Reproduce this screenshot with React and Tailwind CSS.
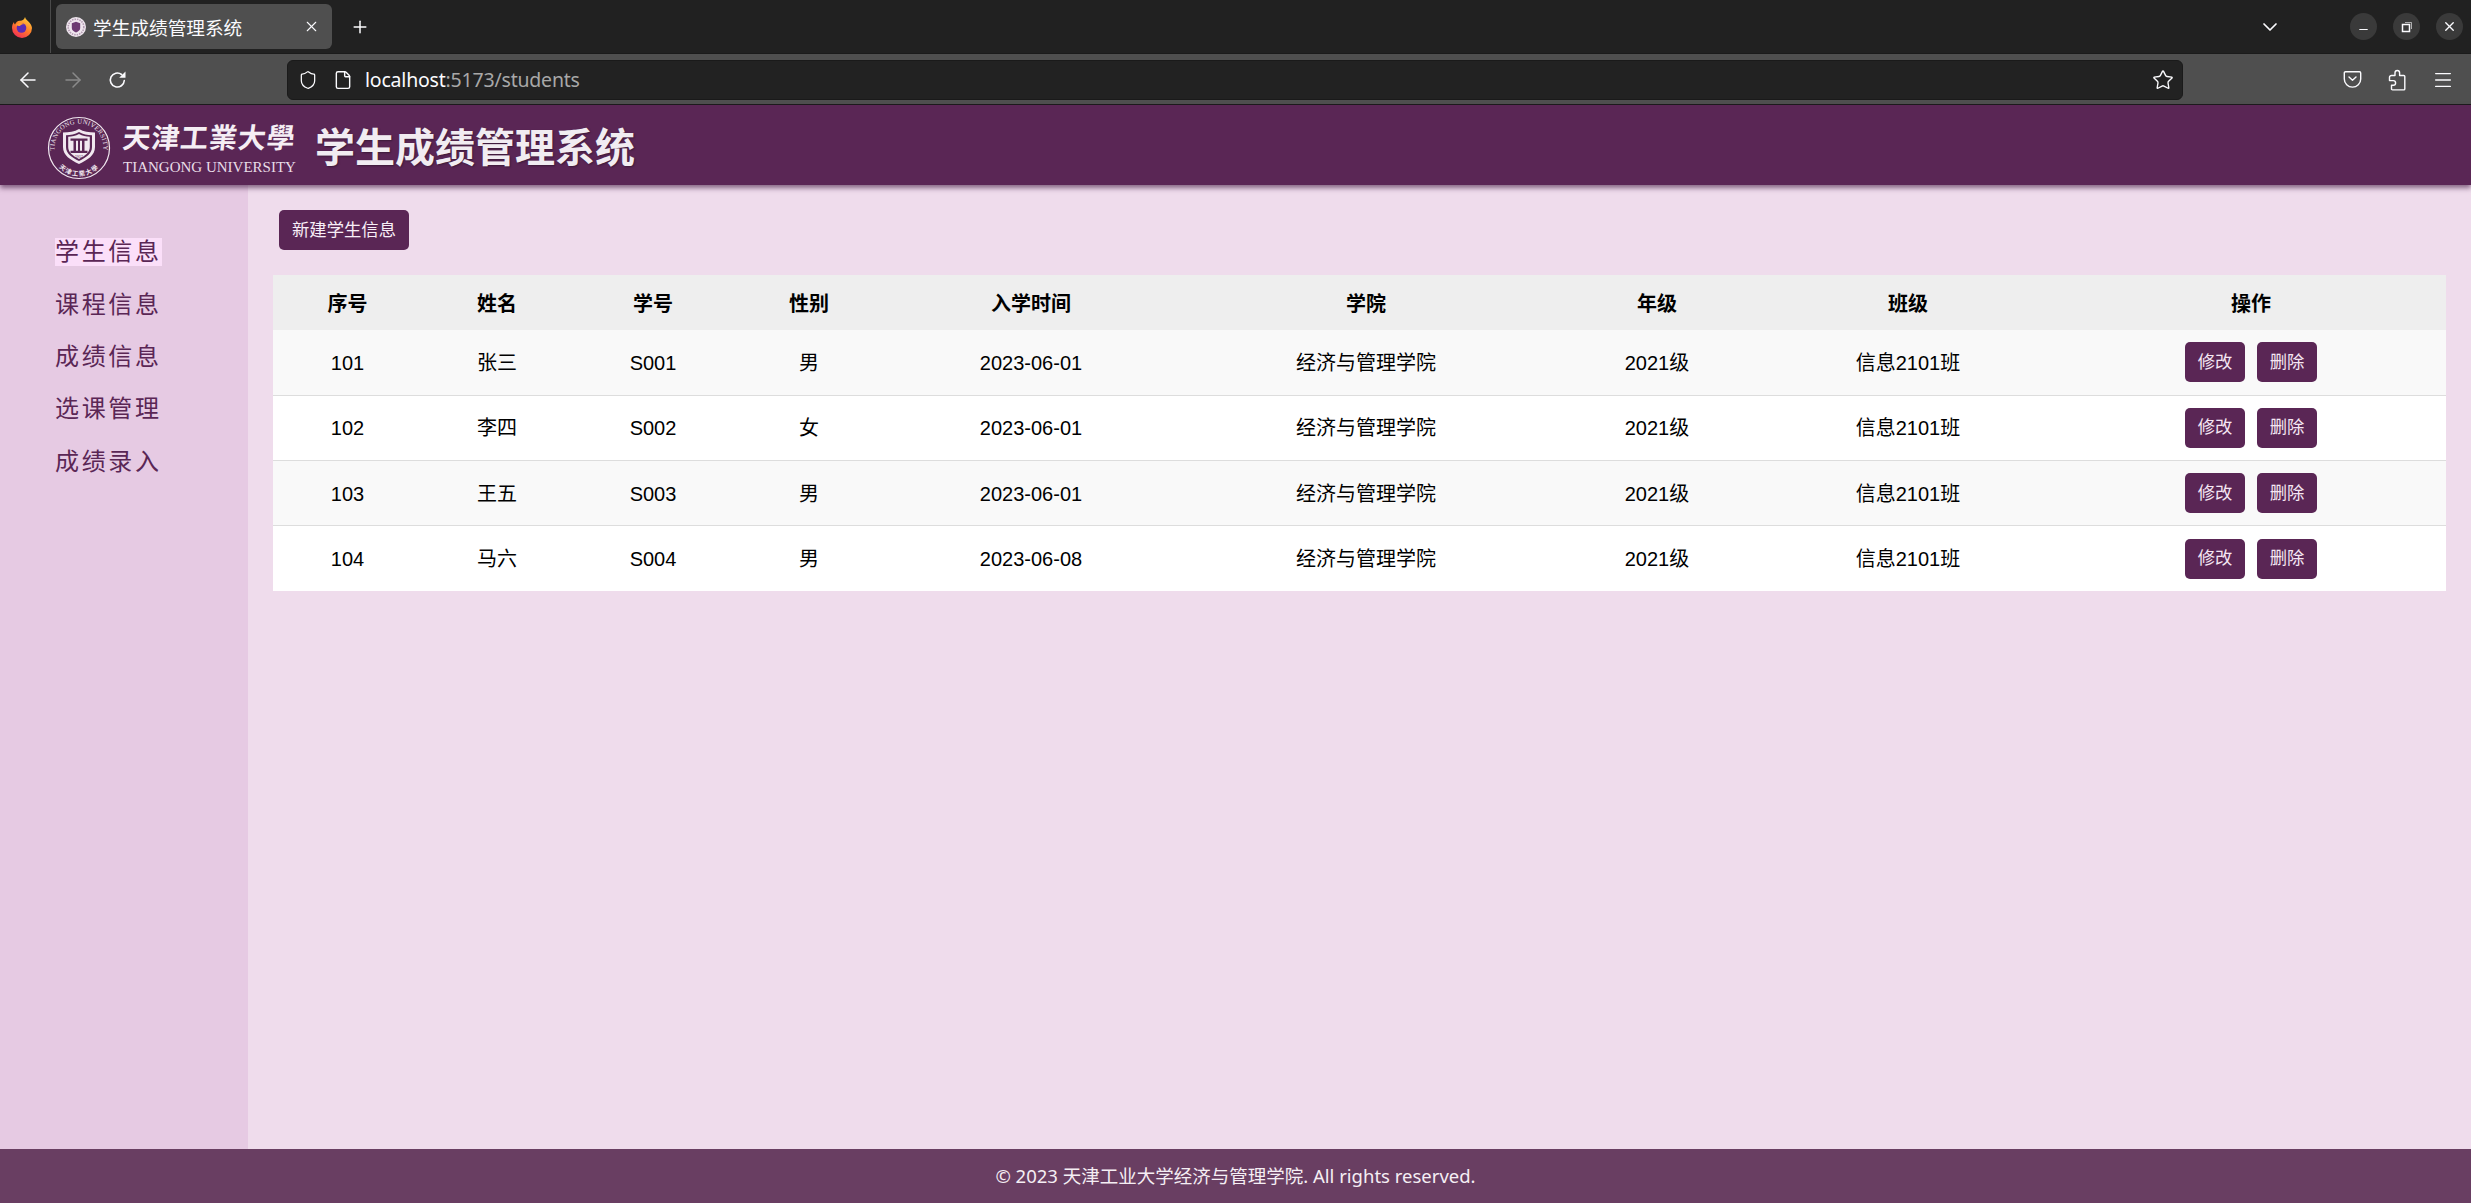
import React from "react";
import { ArrowLeft, ArrowRight, Shield, File, Star, ChevronDown, Minus, X, Plus, Menu } from "lucide-react";

const students = [
  { id: 101, name: "张三", no: "S001", sex: "男", date: "2023-06-01" },
  { id: 102, name: "李四", no: "S002", sex: "女", date: "2023-06-01" },
  { id: 103, name: "王五", no: "S003", sex: "男", date: "2023-06-01" },
  { id: 104, name: "马六", no: "S004", sex: "男", date: "2023-06-08" },
];

const navItems = ["学生信息", "课程信息", "成绩信息", "选课管理", "成绩录入"];

const columns = [
  { label: "序号", width: "w-[149px]" },
  { label: "姓名", width: "w-[150px]" },
  { label: "学号", width: "w-[162px]" },
  { label: "性别", width: "w-[150px]" },
  { label: "入学时间", width: "w-[294px]" },
  { label: "学院", width: "w-[376px]" },
  { label: "年级", width: "w-[206px]" },
  { label: "班级", width: "w-[296px]" },
  { label: "操作", width: "w-[390px]" },
];

function FirefoxLogo() {
  return (
    <svg width="22" height="22" viewBox="0 0 22 22">
      <defs>
        <linearGradient id="fx" x1="0.8" y1="0" x2="0.2" y2="1">
          <stop offset="0" stopColor="#ffd23a" />
          <stop offset="0.5" stopColor="#ff7a2a" />
          <stop offset="1" stopColor="#f0285a" />
        </linearGradient>
      </defs>
      <path d="M14 1c.6 2.400 2 3 3.400 4.400 2.400 2.400 3.600 5 3.600 6.600a10 10 0 0 1-20 0c0-2.600.8-4.600 2-6 0 1.200.4 2 1 2.600C5 6 7 4.600 9 4.800c2 .2 4.600-1.200 5-3.800z" fill="url(#fx)" />
      <circle cx="10.500" cy="12" r="4.800" fill="#5b2bb5" />
      <path d="M5 9c2-2.400 6-2.600 8-.8-2 0-3.400.6-4 1.800-1.600-.2-3 .2-4-1z" fill="#ff9a2e" />
    </svg>
  );
}

function Favicon() {
  return (
    <svg width="20" height="20" viewBox="0 0 20 20">
      <circle cx="10" cy="10" r="10" fill="#efe6ee" />
      <circle cx="10" cy="10" r="7.800" fill="none" stroke="#b39cb2" strokeWidth="1.600" strokeDasharray="1.500 1" />
      <path d="M5.800 6.300 10 4.800l4.200 1.500V11c0 2.500-2.200 3.600-4.200 4.600-2-1-4.200-2.100-4.200-4.600z" fill="#6d3a72" />
    </svg>
  );
}

function ReloadIcon() {
  return (
    <svg width="22" height="22" viewBox="0 0 22 22" fill="none" stroke="#fbfbfe" strokeWidth="1.600" strokeLinecap="round">
      <path d="M17.300 11.500a7 7 0 1 1-2.700-6" />
      <path d="M18.500 2.500v6.300h-6.300z" fill="#fbfbfe" stroke="none" />
    </svg>
  );
}

function PocketIcon() {
  return (
    <svg width="19" height="19" viewBox="0 0 19 19" fill="none" stroke="#fbfbfe" strokeWidth="1.400" strokeLinecap="round" strokeLinejoin="round">
      <path d="M2.500 1.700h14a1.200 1.200 0 0 1 1.200 1.200v6a8.200 8.200 0 0 1-16.400 0v-6a1.200 1.200 0 0 1 1.200-1.200z" />
      <path d="m6 7 3.500 3.300L13 7" />
    </svg>
  );
}

function ExtensionIcon() {
  return (
    <svg width="20" height="22" viewBox="0 0 20 22" fill="none" stroke="#fbfbfe" strokeWidth="1.400" strokeLinejoin="round">
      <path d="M8 6.500V3.800a2.300 2.300 0 0 1 4.600 0v2.700h4.200a1 1 0 0 1 1 1v12.400a1 1 0 0 1-1 1H5.500a1 1 0 0 1-1-1v-3.700h1.800a2.300 2.300 0 0 0 0-4.600H2.500v-3.100a2 2 0 0 1 2-2z" />
    </svg>
  );
}

function RestoreIcon() {
  return (
    <svg width="12" height="12" viewBox="0 0 12 12" fill="none" stroke="#fbfbfe">
      <rect x="1.500" y="3.500" width="7" height="7" strokeWidth="1.500" />
      <path d="M4 1.500h6.500V8" strokeWidth="1" opacity="0.6" />
    </svg>
  );
}

function WindowButton({ children }) {
  return <div className="w-[27px] h-[27px] rounded-full bg-[#3a3a3a] flex items-center justify-center">{children}</div>;
}

function TiangongSeal() {
  return (
    <svg width="64" height="66" viewBox="0 0 64 66" className="shrink-0 mt-[1px]">
      <defs>
        <path id="seal-top" d="M10.800 45.250A24.500 24.500 0 1 1 53.200 45.250" />
        <path id="seal-bottom" d="M4 33a28 28 0 0 0 56 0" />
      </defs>
      <circle cx="32" cy="33" r="30.500" fill="none" stroke="#f1e8f0" strokeWidth="1.200" />
      <text fontFamily="'Liberation Serif', serif" fontSize="6.600" fill="#f1e8f0" letterSpacing="0.300">
        <textPath href="#seal-top" startOffset="50%" textAnchor="middle">TIANGONG UNIVERSITY</textPath>
      </text>
      <text fontFamily="'Noto Sans CJK TC', sans-serif" fontSize="6.500" fontWeight="700" fill="#f1e8f0" letterSpacing="1">
        <textPath href="#seal-bottom" startOffset="50%" textAnchor="middle">天津工業大學</textPath>
      </text>
      <path d="M32 14c4.500 2.800 10 3.500 16 3.500V32c0 8.500-7.500 13-16 17-8.500-4-16-8.500-16-17V17.500c6 0 11.500-.7 16-3.500z" fill="#f1e8f0" />
      <path d="M32 17c4 2.400 8.500 3 13 3.200V32c0 6.800-6 10.600-13 14-7-3.400-13-7.200-13-14V20.200c4.500-.2 9-.8 13-3.200z" fill="#5a2655" />
      <path d="M32 19c3.400 1.900 7 2.600 10.800 2.800V32c0 5.600-5 9-10.800 12-5.800-3-10.800-6.400-10.800-12V21.800c3.800-.2 7.400-.9 10.800-2.800z" fill="#f1e8f0" />
      <path d="M23.500 23.500h17v2.200h-3v10h3v2.200h-17v-2.200h3v-10h-3zm5.500 2.200v10h2v-10zm4 0v10h2v-10z" fill="#5a2655" />
      <text x="32" y="43" textAnchor="middle" fontFamily="'Liberation Sans', sans-serif" fontSize="3.600" fill="#5a2655">1912</text>
    </svg>
  );
}

function BrowserChrome() {
  return (
    <div className="font-['Noto_Sans','Noto_Sans_CJK_SC',sans-serif] text-[#fbfbfe]">
      <div className="h-[53px] bg-[#212121] flex items-center">
        <div className="w-[51px] h-full flex items-center justify-center border-r border-[#4a4a4a] pr-[6px]">
          <FirefoxLogo />
        </div>
        <div className="ml-[5px] w-[276px] h-[45px] rounded-[6px] bg-[#4f4f4f] flex items-center pl-[10px] pr-[12px]">
          <Favicon />
          <span className="ml-[7px] mt-[1px] text-[18.670px] leading-none font-['Noto_Sans_CJK_SC',sans-serif]">学生成绩管理系统</span>
          <X className="ml-auto w-[17px] h-[17px]" strokeWidth={1.500} />
        </div>
        <Plus className="ml-[18px] w-[20px] h-[20px]" strokeWidth={1.800} />
        <ChevronDown className="ml-auto w-[24px] h-[24px]" strokeWidth={1.700} />
        <div className="ml-[68px] mr-[8px] flex items-center gap-[16px]">
          <WindowButton><Minus className="w-[13px] h-[13px] mt-[5px]" strokeWidth={2} /></WindowButton>
          <WindowButton><RestoreIcon /></WindowButton>
          <WindowButton><X className="w-[15px] h-[15px]" strokeWidth={2.200} /></WindowButton>
        </div>
      </div>
      <div className="h-[52px] pt-[1px] bg-[#4f4f4f] border-y border-[#1b1b1b] flex items-center">
        <ArrowLeft className="ml-[16px] w-[24px] h-[24px]" strokeWidth={1.500} />
        <ArrowRight className="ml-[21px] w-[24px] h-[24px] text-[#8a8a8a]" strokeWidth={1.500} />
        <div className="ml-[22px]"><ReloadIcon /></div>
        <div className="ml-[158px] w-[1896px] h-[40px] rounded-[6px] bg-[#222222] border border-[#1a1a1a] flex items-center pl-[10px] pr-[8px]">
          <Shield className="w-[20px] h-[20px]" strokeWidth={1.500} />
          <File className="ml-[15px] w-[20px] h-[20px]" strokeWidth={1.700} />
          <span className="ml-[12px] text-[19.500px] leading-none tracking-[-0.2px]">
            localhost<span className="text-[#a8a8a8]">:5173/students</span>
          </span>
          <Star className="ml-auto w-[22px] h-[22px]" strokeWidth={1.500} />
        </div>
        <div className="ml-[160px]"><PocketIcon /></div>
        <div className="ml-[25px]"><ExtensionIcon /></div>
        <Menu className="ml-[25px] w-[22px] h-[22px]" strokeWidth={1.500} />
      </div>
    </div>
  );
}

function ActionButton({ children }) {
  return (
    <button className="w-[60px] h-[40px] pt-[1px] rounded-[5px] bg-[#5a2655] text-[#f5e6f3] text-[17.330px]">{children}</button>
  );
}

export default function App() {
  return (
    <div className="h-screen flex flex-col overflow-hidden font-['Liberation_Sans','Noto_Sans_CJK_SC',sans-serif]">
      <BrowserChrome />

      <header className="relative z-10 h-[80px] shrink-0 bg-[#5a2655] flex items-center pt-[4px] pl-[47px] shadow-[0_3px_5px_rgba(60,20,60,0.6)]">
        <TiangongSeal />
        <div className="ml-[12px] w-[174px]">
          <div className="-skew-x-6 text-[28px] leading-[34px] font-bold tracking-[0.8px] text-[#f5eef4] whitespace-nowrap font-['Noto_Sans_CJK_TC',sans-serif]">天津工業大學</div>
          <div className="mt-[7px] text-[15px] leading-[15px] text-[#e9dde8] whitespace-nowrap font-['Liberation_Serif',serif]">TIANGONG UNIVERSITY</div>
        </div>
        <h1 className="ml-[18px] mt-[2px] text-[40px] font-bold leading-none text-[#f1ecf1] [text-shadow:1px_1px_2px_rgba(0,0,0,0.35)]">学生成绩管理系统</h1>
      </header>

      <div className="flex-1 flex min-h-0">
        <aside className="w-[248px] shrink-0 bg-[#e6cae3] pt-[41px] pl-[55px]">
          <ul>
            {navItems.map((item, i) => (
              <li key={item} className="h-[52.400px] flex items-center">
                <span className={`text-[24px] leading-[28px] tracking-[2.670px] text-[#5a2655] ${i === 0 ? "bg-[#fbdff9]" : ""}`}>{item}</span>
              </li>
            ))}
          </ul>
        </aside>

        <main className="flex-1 bg-[#efdcec] pt-[25px] pl-[25px] pr-[25px]">
          <button className="ml-[6px] w-[130px] h-[40px] pt-[1px] rounded-[5px] bg-[#5a2655] text-[#f8eef7] text-[17.330px] block">新建学生信息</button>
          <table className="mt-[25px] w-full table-fixed border-collapse text-[20px] text-black text-center">
            <thead>
              <tr className="bg-[#eeeeee] h-[55px]">
                {columns.map((col) => (
                  <th key={col.label} className={`${col.width} pt-[2px] font-bold`}>{col.label}</th>
                ))}
              </tr>
            </thead>
            <tbody>
              {students.map((s, i) => (
                <tr key={s.id} className={`h-[65.330px] ${i < 3 ? "border-b border-[#dddddd]" : ""} ${i % 2 === 0 ? "bg-[#f9f9f9]" : "bg-white"}`}>
                  <td className="pt-[1px]">{s.id}</td>
                  <td className="pt-[1px]">{s.name}</td>
                  <td className="pt-[1px]">{s.no}</td>
                  <td className="pt-[1px]">{s.sex}</td>
                  <td className="pt-[1px]">{s.date}</td>
                  <td className="pt-[1px]">经济与管理学院</td>
                  <td className="pt-[1px]">2021级</td>
                  <td className="pt-[1px]">信息2101班</td>
                  <td>
                    <div className="flex justify-center gap-[12px]">
                      <ActionButton>修改</ActionButton>
                      <ActionButton>删除</ActionButton>
                    </div>
                  </td>
                </tr>
              ))}
            </tbody>
          </table>
        </main>
      </div>

      <footer className="h-[54px] shrink-0 bg-[#693e62] flex items-center justify-center text-[18.500px] text-[#f5eef4] font-['Noto_Sans','Noto_Sans_CJK_SC',sans-serif]">
        © 2023 天津工业大学经济与管理学院. All rights reserved.
      </footer>
    </div>
  );
}
